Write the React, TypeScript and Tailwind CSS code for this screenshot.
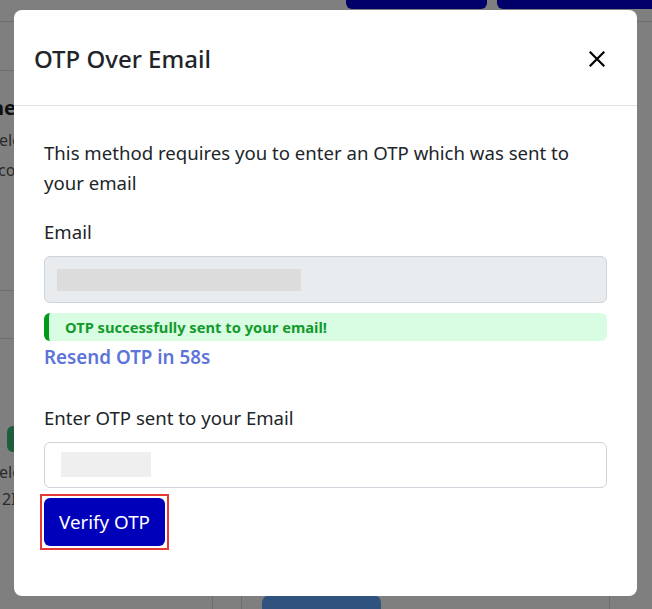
import { useState } from 'react';

// Page that sits behind the dialog; only its edges show around the modal
function BackgroundPage() {
  return (
    <div className="h-[609px] w-[652px] overflow-hidden bg-white text-[#222]">
      <div className="flex h-[22px] border-b border-[#dcdcdc]">
        <div className="w-[346px]" />
        <div className="h-[9px] w-[141px] rounded-b-md bg-[#0000d0]" />
        <div className="w-[10px]" />
        <div className="h-[9px] flex-1 rounded-bl-md bg-[#0000d0]" />
      </div>
      <div className="flex">
        <div className="w-[14px]">
          <div className="mt-[48px] border-b border-[#dcdcdc]" />
          <div className="w-[120px] whitespace-nowrap">
            <div className="-ml-[9px] mt-[22px] text-[20px] font-bold leading-[30px]">he</div>
            <div className="-ml-[1px] mt-[2px] text-[16px] leading-[30px] text-[#555]">elo</div>
            <div className="-ml-[2px] text-[16px] leading-[30px] text-[#555]">co</div>
          </div>
          <div className="mt-[105px] border-b border-[#dcdcdc]" />
          <div className="mt-[47px] border-b border-[#dcdcdc]" />
          <div className="ml-[7px] mt-[87px] h-[26px] w-[20px] rounded-md bg-[#3cbc74]" />
          <div className="-ml-[1px] w-[120px] whitespace-nowrap text-[16px] leading-[27px] text-[#555]">
            <div className="mt-[7px]">elo</div>
            <div className="ml-[3px]">2I</div>
          </div>
        </div>
        <div className="flex flex-1 flex-col">
          <div className="mt-[573px] flex h-[20px]">
            <div className="w-[199px] border-r border-[#dcdcdc]" />
            <div className="w-[29px] border-r border-[#dcdcdc]" />
            <div className="w-[20px]" />
            <div className="w-[119px] rounded-t-lg bg-[#5ea4ff]" />
            <div className="w-[229px] border-r border-[#dcdcdc]" />
          </div>
        </div>
      </div>
    </div>
  );
}

function CloseIcon() {
  return (
    <svg width="16" height="16" viewBox="0 0 16 16" fill="none">
      <path d="M1.5 1.5l13 13M14.5 1.5l-13 13" stroke="#000" strokeWidth="2.2" strokeLinecap="square" />
    </svg>
  );
}

export default function App() {
  const [otp, setOtp] = useState('');
  const font = { fontFamily: '"Noto Sans", "Open Sans", sans-serif' };

  return (
    <div className="relative h-[609px] w-[652px] overflow-hidden" style={font}>
      <BackgroundPage />

      {/* Backdrop + dialog */}
      <div className="absolute inset-0 bg-black/50 pl-[14px] pt-[10px]">
        <div className="flex h-[586px] w-[623px] flex-col rounded-lg bg-white text-[#212529]">
          <div className="flex h-[96px] items-center justify-between border-b border-[#dee2e6] pl-5 pr-7 pt-[3px]">
            <h2 className="text-[24px] font-medium leading-none">OTP Over Email</h2>
            <button className="flex h-6 w-6 items-center justify-center">
              <CloseIcon />
            </button>
          </div>

          <div className="px-[30px] pt-[32px] text-[18.6px] leading-[30px]">
            <p className="pr-[20px]">This method requires you to enter an OTP which was sent to your email</p>

            <label className="mt-[19px] block">Email</label>
            <div className="mt-[9px] flex h-[47px] items-center rounded-md border border-[#ced4da] bg-[#e9ecef] px-3">
              <div className="h-[22px] w-[244px] bg-[#dcdcdc]" />
            </div>

            <div className="mt-[10px] flex h-[28px] items-center rounded-md border-l-[5px] border-[#009a1a] bg-[#d8fde3] pl-4">
              <span className="text-[14.7px] font-bold leading-none text-[#139a2c]">
                OTP successfully sent to your email!
              </span>
            </div>
            <div className="mt-px text-[18.8px] font-semibold text-[#5d74d8]">Resend OTP in 58s</div>

            <label className="mt-[31px] block">Enter OTP sent to your Email</label>
            <div className="relative mt-[9px] h-[46px] rounded-md border border-[#ced4da] bg-white">
              <div className="absolute left-[16px] top-[9px] h-[25px] w-[90px] bg-[#efefef]" />
              <input
                value={otp}
                onChange={(e) => setOtp(e.target.value)}
                className="relative h-full w-full bg-transparent px-4 outline-none"
              />
            </div>

            <div className="-ml-[4px] mt-[6px] inline-flex border-2 border-[#e53935] p-[2px]">
              <button className="h-[48px] w-[121px] rounded-md bg-[#0000bb] text-[18.8px] text-white">
                Verify OTP
              </button>
            </div>
          </div>
        </div>
      </div>
    </div>
  );
}
